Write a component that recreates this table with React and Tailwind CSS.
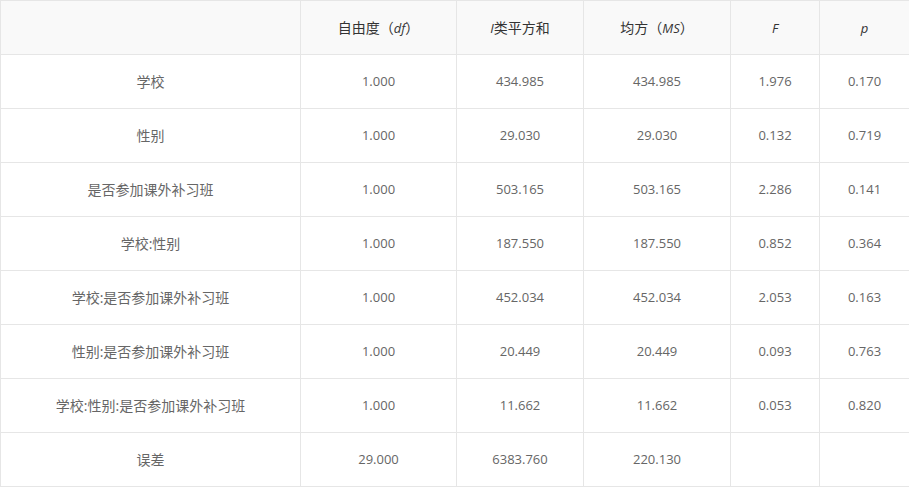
const ROWS = [
  ['学校', '1.000', '434.985', '434.985', '1.976', '0.170'],
  ['性别', '1.000', '29.030', '29.030', '0.132', '0.719'],
  ['是否参加课外补习班', '1.000', '503.165', '503.165', '2.286', '0.141'],
  ['学校:性别', '1.000', '187.550', '187.550', '0.852', '0.364'],
  ['学校:是否参加课外补习班', '1.000', '452.034', '452.034', '2.053', '0.163'],
  ['性别:是否参加课外补习班', '1.000', '20.449', '20.449', '0.093', '0.763'],
  ['学校:性别:是否参加课外补习班', '1.000', '11.662', '11.662', '0.053', '0.820'],
  ['误差', '29.000', '6383.760', '220.130', '', ''],
]

const font = { fontFamily: '"Open Sans", "Noto Sans CJK SC", sans-serif' }

export default function App() {
  return (
    <div className="w-[909px] h-[487px] bg-white overflow-hidden" style={font}>
      <table className="w-[909px] table-fixed border-collapse text-center">
        <colgroup>
          <col className="w-[300px]" />
          <col className="w-[156px]" />
          <col className="w-[127px]" />
          <col className="w-[147px]" />
          <col className="w-[89px]" />
          <col className="w-[90px]" />
        </colgroup>
        <thead>
          <tr className="h-[54px] bg-[#f9f9f9] text-[#333] text-[14px]">
            <th className="border border-[#e6e6e6] font-normal"></th>
            <th className="border border-[#e6e6e6] font-normal">自由度（<i className="text-[13px]">df</i>）</th>
            <th className="border border-[#e6e6e6] font-normal"><i className="text-[13px]">I</i>类平方和</th>
            <th className="border border-[#e6e6e6] font-normal">均方（<i className="text-[13px]">MS</i>）</th>
            <th className="border border-[#e6e6e6] font-normal"><i className="text-[13px]">F</i></th>
            <th className="border border-[#e6e6e6] font-normal"><i className="text-[13px]">p</i></th>
          </tr>
        </thead>
        <tbody>
          {ROWS.map((r) => (
            <tr key={r[0]} className="h-[54px] text-[#666]">
              {r.map((c, i) => (
                <td key={i} className={`border border-[#e6e6e6] ${i === 0 ? 'text-[14px]' : 'text-[13px]'}`}>{c}</td>
              ))}
            </tr>
          ))}
        </tbody>
      </table>
    </div>
  )
}
